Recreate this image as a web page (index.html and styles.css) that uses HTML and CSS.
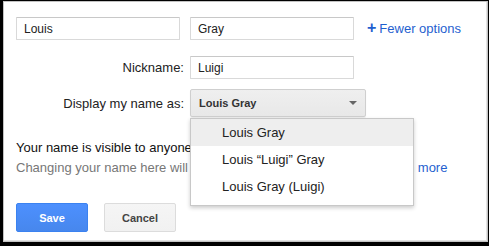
FILE: index.html
```html
<!DOCTYPE html>
<html>
<head>
<meta charset="utf-8">
<link rel="stylesheet" href="styles.css">
</head>
<body>
<div class="panel">
  <div class="row-names">
    <input class="field" type="text" value="Louis">
    <input class="field" type="text" value="Gray">
    <a class="toggle" href="#"><span class="plus">+</span><span>Fewer options</span></a>
  </div>
  <div class="row-form nick">
    <label class="label">Nickname:</label>
    <input class="field" type="text" value="Luigi">
  </div>
  <div class="row-form display">
    <label class="label">Display my name as:</label>
    <div class="select-wrap">
      <div class="select">
        <span class="select-text">Louis Gray</span>
        <span class="arrow"></span>
      </div>
      <ul class="menu">
        <li class="item active">Louis Gray</li>
        <li class="item">Louis “Luigi” Gray</li>
        <li class="item">Louis Gray (Luigi)</li>
      </ul>
    </div>
  </div>
  <div class="notes">
    <div class="note-main">Your name is visible to anyone who can see your profile.</div>
    <div class="note-sub">Changing your name here will change it in all Google products. <a class="link" href="#">Learn more</a></div>
  </div>
  <div class="actions">
    <button class="btn btn-primary">Save</button>
    <button class="btn btn-default">Cancel</button>
  </div>
</div>
</body>
</html>
```

FILE: styles.css
```css
html, body {
  margin: 0;
  padding: 0;
}
body {
  background: #000;
  width: 489px;
  height: 246px;
  overflow: hidden;
  font-family: Arial, "Liberation Sans", Helvetica, sans-serif;
  font-size: 13px;
  color: #222;
}
.panel {
  box-sizing: border-box;
  margin: 1px 1px 4px 3px;
  width: 485px;
  height: 241px;
  background: #fff;
  border: 1px solid #c2c2c2;
  box-shadow: inset -1px -1px 0 #e2e2e2;
  padding: 15px 12px 0 12px;
}
.row-names {
  display: flex;
  align-items: center;
  height: 23px;
}
.field {
  box-sizing: border-box;
  width: 164px;
  height: 23px;
  margin: 0;
  padding: 0 7px;
  border: 1px solid #d9d9d9;
  border-top-color: #c8c8c8;
  border-radius: 1px;
  font-family: Arial, "Liberation Sans", Helvetica, sans-serif;
  font-size: 12px;
  color: #222;
  background: #fff;
  outline: none;
}
.row-names .field + .field {
  margin-left: 10px;
}
.toggle {
  margin-left: 13px;
  color: #1f5fcf;
  text-decoration: none;
  font-size: 13px;
  display: flex;
  align-items: center;
}
.plus {
  font-weight: bold;
  font-size: 16px;
  margin-right: 3px;
  position: relative;
  top: -1px;
}
.row-form {
  display: grid;
  grid-template-columns: 168px auto;
  column-gap: 6px;
  align-items: center;
}
.nick {
  margin-top: 16px;
}
.display {
  margin-top: 10px;
}
.label {
  text-align: right;
  color: #222;
}
.select-wrap {
  position: relative;
  width: 176px;
}
.select {
  box-sizing: border-box;
  height: 28px;
  width: 176px;
  display: flex;
  align-items: center;
  padding: 0 7px 0 8px;
  border: 1px solid #cfcfcf;
  border-radius: 2px;
  background: linear-gradient(#efefef, #e8e8e8);
  box-shadow: 0 1px 1px rgba(0,0,0,0.08);
}
.select-text {
  flex: 1;
  font-size: 11px;
  font-weight: bold;
  color: #333;
}
.arrow {
  width: 0;
  height: 0;
  border-left: 4px solid transparent;
  border-right: 4px solid transparent;
  border-top: 4px solid #666;
  margin-right: 1px;
}
.menu {
  position: absolute;
  left: 0;
  top: 29px;
  box-sizing: border-box;
  width: 224px;
  margin: 0;
  padding: 0 0 5px 0;
  list-style: none;
  background: #fff;
  border: 1px solid #c8c8c8;
  box-shadow: 0 2px 4px rgba(0,0,0,0.2);
  z-index: 2;
}
.item {
  height: 27px;
  line-height: 27px;
  padding-left: 31px;
  font-size: 13px;
  color: #222;
}
.item.active {
  background: #eee;
}
.notes {
  margin-top: 21px;
  line-height: 20px;
  white-space: nowrap;
}
.note-main {
  color: #111;
}
.note-sub {
  color: #777;
}
.link {
  color: #1f5fcf;
  text-decoration: none;
}
.actions {
  margin-top: 25px;
  display: flex;
  gap: 16px;
}
.btn {
  box-sizing: border-box;
  width: 72px;
  height: 29px;
  margin: 0;
  padding: 0;
  border-radius: 2px;
  font-family: Arial, "Liberation Sans", Helvetica, sans-serif;
  font-size: 11px;
  font-weight: bold;
  cursor: default;
}
.btn-primary {
  color: #fff;
  background: linear-gradient(#4d90fe, #4787ed);
  border: 1px solid #3b82f0;
}
.btn-default {
  color: #444;
  background: linear-gradient(#f5f5f5, #f1f1f1);
  border: 1px solid #dcdcdc;
}
```
